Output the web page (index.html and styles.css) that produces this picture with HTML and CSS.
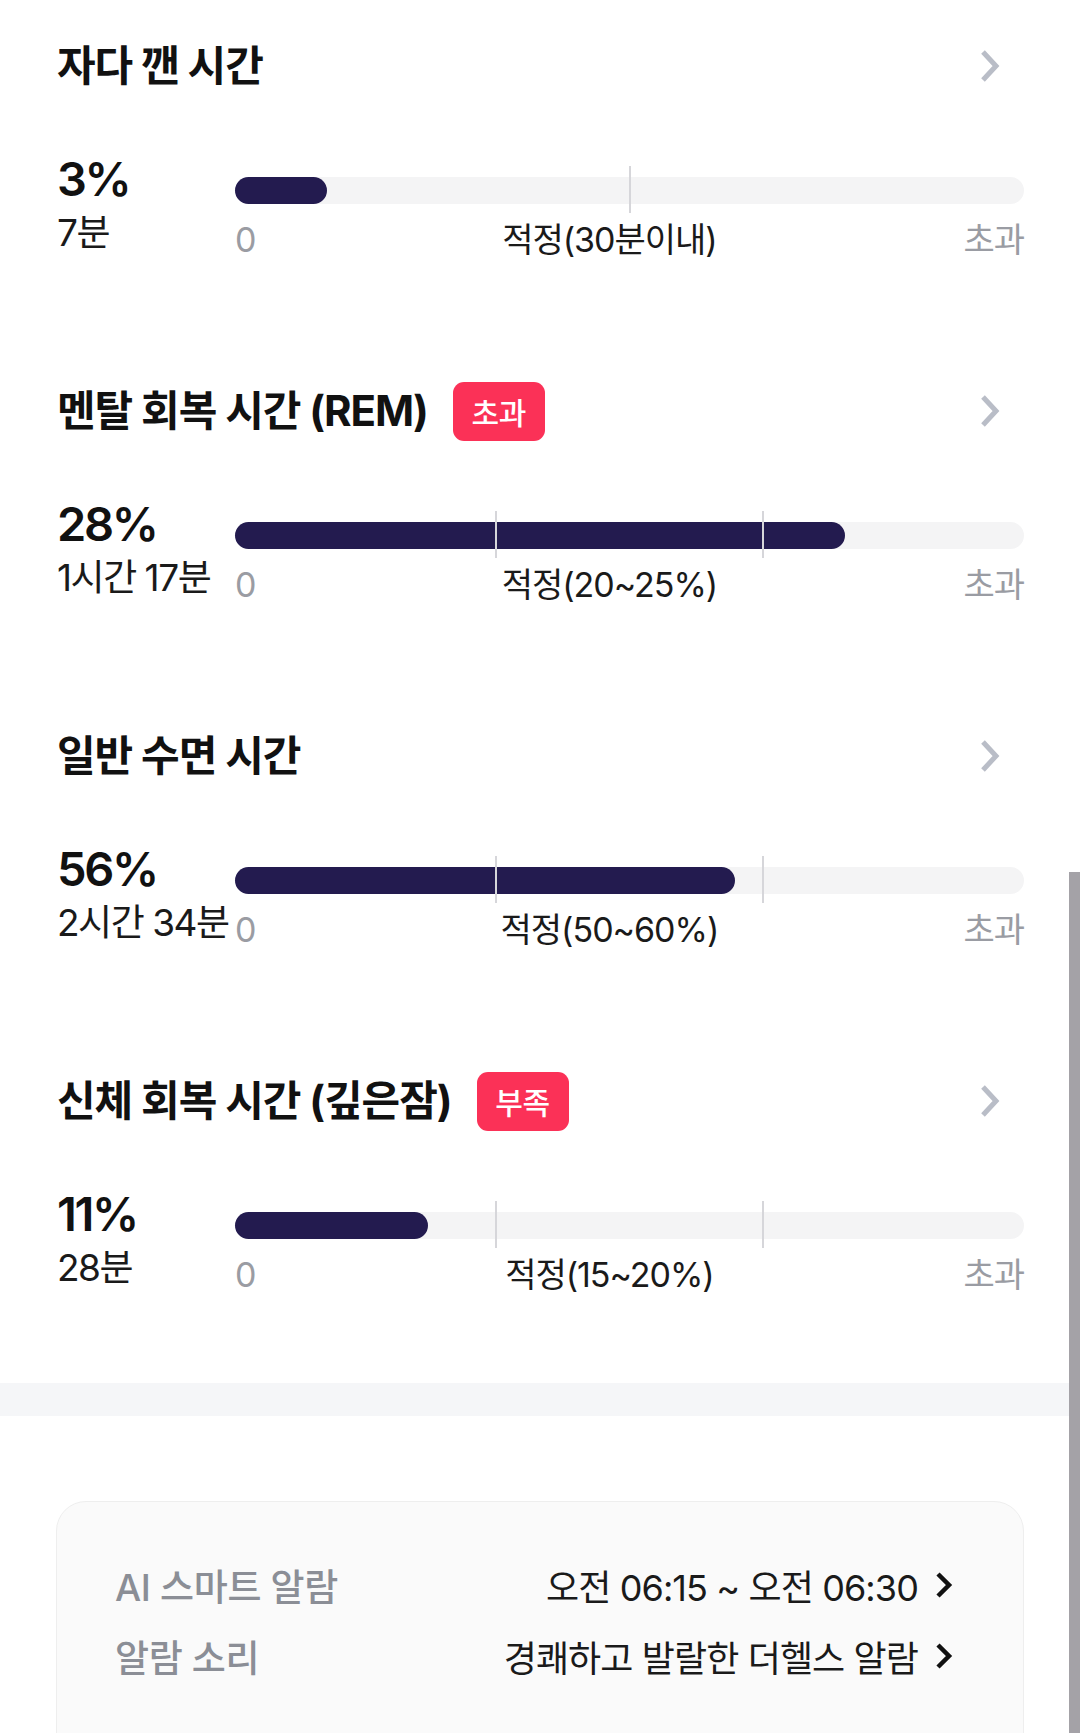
FILE: index.html
```html
<!DOCTYPE html>
<html lang="ko">
<head>
<meta charset="utf-8">
<link rel="stylesheet" href="styles.css">
</head>
<body>
<div class="page">
  <section class="sec">
    <div class="head">
      <div class="title-wrap"><h2 class="title">자다 깬 시간</h2></div>
      <svg class="chev" viewBox="0 0 22 34" width="22" height="34"><polyline points="4,3 17,17 4,31" fill="none" stroke="#b9bdc7" stroke-width="5"/></svg>
    </div>
    <div class="stat">
      <div class="nums"><div class="pct">3%</div><div class="dur">7분</div></div>
      <div class="gauge">
        <div class="track"><div class="fill" style="width:11.7%"></div><span class="tick" style="left:50%"></span></div>
        <div class="scale"><span class="s-min">0</span><span class="s-mid">적정(30분이내)</span><span class="s-max">초과</span></div>
      </div>
    </div>
  </section>

  <section class="sec">
    <div class="head">
      <div class="title-wrap"><h2 class="title">멘탈 회복 시간 (REM)</h2><span class="badge">초과</span></div>
      <svg class="chev" viewBox="0 0 22 34" width="22" height="34"><polyline points="4,3 17,17 4,31" fill="none" stroke="#b9bdc7" stroke-width="5"/></svg>
    </div>
    <div class="stat">
      <div class="nums"><div class="pct">28%</div><div class="dur">1시간 17분</div></div>
      <div class="gauge">
        <div class="track"><div class="fill" style="width:77.3%"></div><span class="tick" style="left:33.1%"></span><span class="tick" style="left:66.9%"></span></div>
        <div class="scale"><span class="s-min">0</span><span class="s-mid">적정(20~25%)</span><span class="s-max">초과</span></div>
      </div>
    </div>
  </section>

  <section class="sec">
    <div class="head">
      <div class="title-wrap"><h2 class="title">일반 수면 시간</h2></div>
      <svg class="chev" viewBox="0 0 22 34" width="22" height="34"><polyline points="4,3 17,17 4,31" fill="none" stroke="#b9bdc7" stroke-width="5"/></svg>
    </div>
    <div class="stat">
      <div class="nums"><div class="pct">56%</div><div class="dur">2시간 34분</div></div>
      <div class="gauge">
        <div class="track"><div class="fill" style="width:63.4%"></div><span class="tick" style="left:33.1%"></span><span class="tick" style="left:66.9%"></span></div>
        <div class="scale"><span class="s-min">0</span><span class="s-mid">적정(50~60%)</span><span class="s-max">초과</span></div>
      </div>
    </div>
  </section>

  <section class="sec last">
    <div class="head">
      <div class="title-wrap"><h2 class="title">신체 회복 시간 (깊은잠)</h2><span class="badge">부족</span></div>
      <svg class="chev" viewBox="0 0 22 34" width="22" height="34"><polyline points="4,3 17,17 4,31" fill="none" stroke="#b9bdc7" stroke-width="5"/></svg>
    </div>
    <div class="stat">
      <div class="nums"><div class="pct">11%</div><div class="dur">28분</div></div>
      <div class="gauge">
        <div class="track"><div class="fill" style="width:24.5%"></div><span class="tick" style="left:33.1%"></span><span class="tick" style="left:66.9%"></span></div>
        <div class="scale"><span class="s-min">0</span><span class="s-mid">적정(15~20%)</span><span class="s-max">초과</span></div>
      </div>
    </div>
  </section>

  <div class="band"></div>

  <div class="card">
    <div class="row">
      <span class="label">AI 스마트 알람</span>
      <span class="value">오전 06:15 ~ 오전 06:30<svg class="rchev" viewBox="0 0 18 28" width="18" height="28"><polyline points="3,3 14,14 3,25" fill="none" stroke="#111" stroke-width="4.5"/></svg></span>
    </div>
    <div class="row">
      <span class="label">알람 소리</span>
      <span class="value">경쾌하고 발랄한 더헬스 알람<svg class="rchev" viewBox="0 0 18 28" width="18" height="28"><polyline points="3,3 14,14 3,25" fill="none" stroke="#111" stroke-width="4.5"/></svg></span>
    </div>
  </div>

  <div class="scrollbar"></div>
</div>
</body>
</html>
```

FILE: styles.css
```css
html, body {
  margin: 0;
  padding: 0;
  background: #ffffff;
}
body {
  font-family: Inter, "Noto Sans CJK KR", "Noto Sans", sans-serif;
  color: #111111;
  letter-spacing: -0.02em;
}
.page {
  position: relative;
  width: 1080px;
  height: 1733px;
  overflow: hidden;
}
.sec {
  padding: 36px 56px 85px 57px;
}
.sec.last {
  padding-bottom: 88px;
}
.head {
  display: flex;
  align-items: center;
  justify-content: space-between;
  height: 60px;
}
.title-wrap {
  display: flex;
  align-items: center;
  gap: 25px;
}
.title {
  margin: 0;
  font-size: 42px;
  font-weight: 700;
  line-height: 60px;
  letter-spacing: -0.025em;
  color: #111111;
}
.badge {
  display: flex;
  align-items: center;
  justify-content: center;
  width: 92px;
  height: 59px;
  border-radius: 11px;
  background: #fb3157;
  color: #ffffff;
  font-size: 30px;
  font-weight: 500;
}
.chev {
  display: block;
  margin-right: 23px;
}
.stat {
  display: grid;
  grid-template-columns: 178px 1fr;
  margin-top: 54px;
}
.nums {
  display: flex;
  flex-direction: column;
}
.pct {
  font-size: 47px;
  font-weight: 600;
  line-height: 58px;
  letter-spacing: -0.05em;
  color: #111111;
}
.dur {
  font-size: 37px;
  font-weight: 400;
  line-height: 50px;
  letter-spacing: -0.04em;
  color: #1a1a1a;
  white-space: nowrap;
}
.gauge {
  padding-top: 27px;
}
.track {
  position: relative;
  height: 27px;
  border-radius: 14px;
  background: #f4f4f5;
}
.fill {
  height: 100%;
  border-radius: 14px;
  background: #231b4f;
}
.tick {
  position: absolute;
  top: -11px;
  bottom: -9px;
  width: 2px;
  margin-left: -1px;
  background: #d6d6da;
}
.scale {
  display: flex;
  justify-content: space-between;
  margin-top: 16px;
  font-size: 34px;
  line-height: 40px;
  letter-spacing: -0.03em;
}
.s-min, .s-max {
  color: #9a9ca3;
}
.s-mid {
  color: #1a1a1a;
}
.band {
  height: 33px;
  background: #f5f6f8;
}
.card {
  margin: 85px 56px 0 56px;
  padding: 53px 70px 120px 58px;
  background: #fafafa;
  border: 1px solid #eeeeee;
  border-radius: 30px;
  display: flex;
  flex-direction: column;
  gap: 11px;
}
.row {
  display: flex;
  align-items: center;
  justify-content: space-between;
  height: 60px;
}
.label {
  color: #8b8e96;
  font-weight: 500;
  font-size: 37px;
  letter-spacing: -0.01em;
}
.value {
  display: flex;
  align-items: center;
  gap: 17px;
  color: #1a1a1a;
  font-size: 36px;
  letter-spacing: -0.025em;
}
.rchev {
  display: block;
}
.scrollbar {
  position: absolute;
  right: 0;
  top: 872px;
  bottom: 0;
  width: 11px;
  background: #a4a2a7;
}
```
